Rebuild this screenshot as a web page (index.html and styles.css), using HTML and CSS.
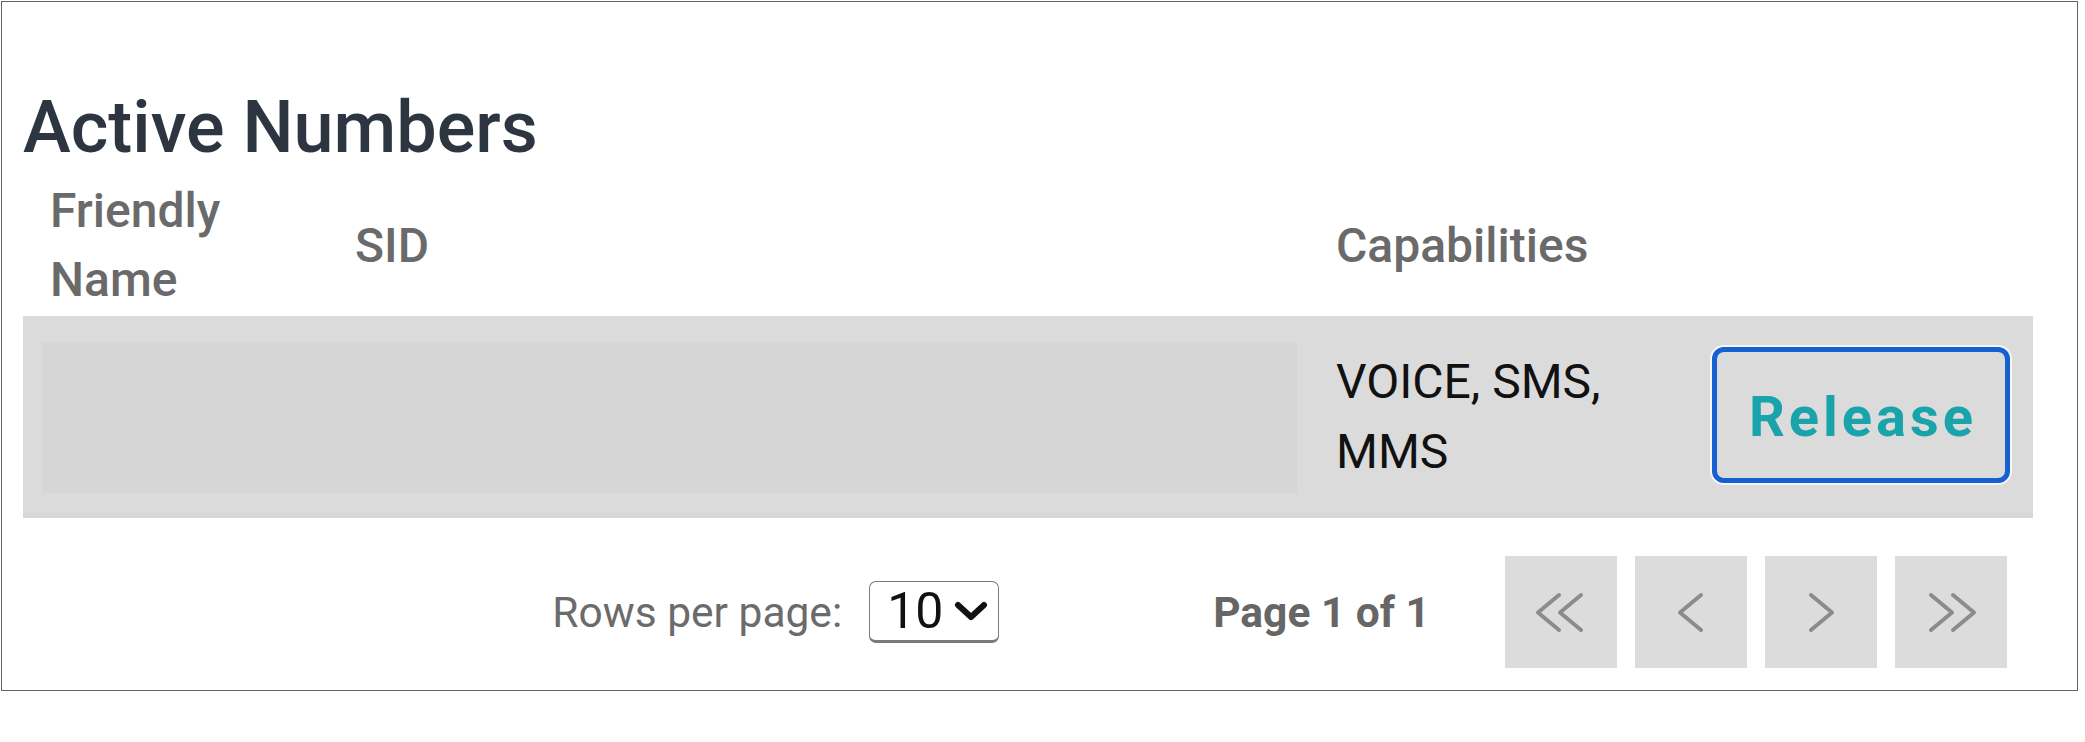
FILE: index.html
```html
<!DOCTYPE html>
<html lang="en">
<head>
<meta charset="utf-8">
<title>Active Numbers</title>
<link rel="stylesheet" href="styles.css">
</head>
<body>
<div class="panel">
  <h2 class="title">Active Numbers</h2>
  <table class="numbers">
    <colgroup>
      <col class="c-name">
      <col class="c-sid">
      <col class="c-cap">
      <col class="c-act">
    </colgroup>
    <thead>
      <tr>
        <th>Friendly Name</th>
        <th>SID</th>
        <th>Capabilities</th>
        <th></th>
      </tr>
    </thead>
    <tbody>
      <tr>
        <td colspan="2" class="redacted-cell"><div class="redacted"></div></td>
        <td class="cap">VOICE, SMS, MMS</td>
        <td class="act"><button class="release" type="button">Release</button></td>
      </tr>
    </tbody>
  </table>
  <div class="pager">
    <span class="rows-label">Rows per page:</span>
    <div class="select">
      <span class="select-value">10</span>
      <svg class="select-chev" width="34" height="22" viewBox="0 0 34 22"><polyline points="4,5 17,17 30,5" fill="none" stroke="#111" stroke-width="6" stroke-linecap="round" stroke-linejoin="round"/></svg>
    </div>
    <span class="page-info">Page 1 of 1</span>
    <div class="page-btns">
      <button class="pbtn" type="button" aria-label="First page"><svg width="112" height="112" viewBox="0 0 112 112"><polyline points="54,39 33,56.5 54,74" class="chev"/><polyline points="76,39 55,56.5 76,74" class="chev"/></svg></button>
      <button class="pbtn" type="button" aria-label="Previous page"><svg width="112" height="112" viewBox="0 0 112 112"><polyline points="66,39 45,56.5 66,74" class="chev"/></svg></button>
      <button class="pbtn" type="button" aria-label="Next page"><svg width="112" height="112" viewBox="0 0 112 112"><polyline points="46,39 67,56.5 46,74" class="chev"/></svg></button>
      <button class="pbtn" type="button" aria-label="Last page"><svg width="112" height="112" viewBox="0 0 112 112"><polyline points="36,39 57,56.5 36,74" class="chev"/><polyline points="58,39 79,56.5 58,74" class="chev"/></svg></button>
    </div>
  </div>
</div>
</body>
</html>
```

FILE: styles.css
```css
* {
  box-sizing: border-box;
}

html,
body {
  margin: 0;
  background: #ffffff;
}

body {
  font-family: Roboto, "Liberation Sans", Arial, sans-serif;
}

.panel {
  margin: 1px 0 0 1px;
  width: 2077px;
  height: 690px;
  border: 1px solid #5b6767;
  padding: 84px 0 0 21px;
}

.title {
  margin: 0;
  font-size: 72px;
  font-weight: 500;
  line-height: 84px;
  color: #2d3640;
}

.numbers {
  border-collapse: collapse;
  table-layout: fixed;
  width: 2010px;
}

.c-name { width: 305px; }
.c-sid { width: 981px; }
.c-cap { width: 373px; }
.c-act { width: 351px; }

.numbers th {
  font-size: 48px;
  font-weight: 500;
  line-height: 69px;
  color: #6a6a6a;
  text-align: left;
  vertical-align: middle;
  padding: 6px 30px 2px 27px;
}

.numbers td {
  font-size: 48px;
  line-height: 70px;
  color: #111111;
  background: #dbdbdb;
  vertical-align: middle;
  padding: 31px 30px 26px 27px;
  border-bottom: 5px solid #d6d6d6;
}

.numbers td.redacted-cell {
  padding: 26px 12px 20px 19px;
}

.redacted {
  height: 151px;
  background: #d6d6d6;
}

.numbers td.act {
  padding: 0 23px 0 30px;
}

.release {
  display: block;
  width: 298px;
  height: 136px;
  padding: 5px 0 0 4px;
  border: 5px solid #1660d3;
  border-radius: 12px;
  box-shadow: 0 0 0 2px rgba(255, 255, 255, 0.75);
  background: transparent;
  color: #19a3ab;
  font-family: Roboto, "Liberation Sans", Arial, sans-serif;
  font-size: 56px;
  font-weight: 700;
  letter-spacing: 4px;
}

.pager {
  display: flex;
  align-items: center;
  justify-content: flex-end;
  width: 2010px;
  height: 112px;
  margin-top: 38px;
  padding-right: 26px;
}

.rows-label {
  font-size: 42.5px;
  color: #6b6b6b;
}

.select {
  display: flex;
  align-items: center;
  justify-content: space-between;
  width: 130px;
  height: 62px;
  margin-left: 27px;
  padding: 0 10px 0 17px;
  border: 1.5px solid #7a7a7a;
  border-bottom-width: 3px;
  border-radius: 7px;
}

.select-value {
  font-size: 50px;
  line-height: 1;
  color: #111111;
}

.select-chev {
  display: block;
}

.page-info {
  margin-left: 214px;
  font-size: 42.5px;
  font-weight: 700;
  color: #666666;
}

.page-btns {
  display: flex;
  gap: 18px;
  margin-left: 75px;
}

.pbtn {
  display: block;
  width: 112px;
  height: 112px;
  padding: 0;
  border: 0;
  background: #dcdcdc;
}

.pbtn svg {
  display: block;
}

.chev {
  fill: none;
  stroke: #8c8c8c;
  stroke-width: 4;
  stroke-linecap: round;
  stroke-linejoin: round;
}
```
